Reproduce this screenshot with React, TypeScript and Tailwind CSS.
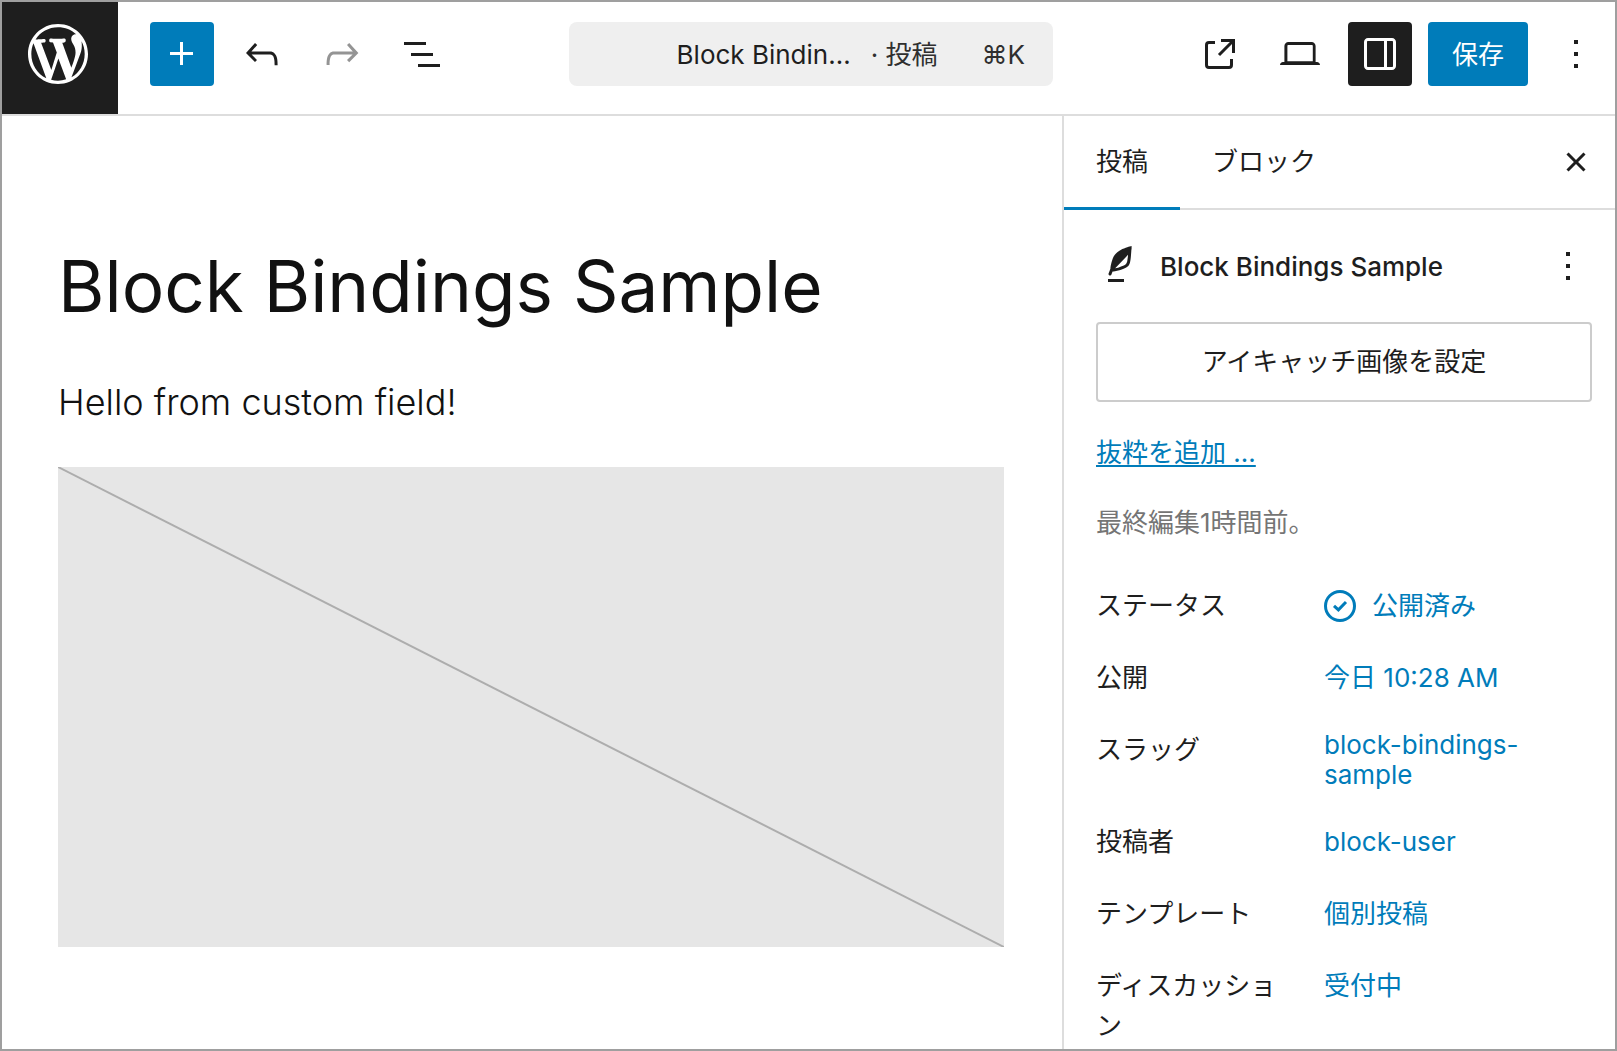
import { useState } from "react";
import type { ReactNode } from "react";

const ICONS = {
  wordpress:
    "M20 10c0-5.51-4.49-10-10-10C4.48 0 0 4.49 0 10c0 5.52 4.48 10 10 10 5.51 0 10-4.48 10-10zM7.78 15.37L4.37 6.22c.55-.02 1.17-.08 1.17-.08.5-.06.44-1.13-.06-1.11 0 0-1.45.11-2.37.11-.18 0-.37 0-.58-.01C4.12 2.69 6.87 1.11 10 1.11c2.33 0 4.45.87 6.05 2.34-.68-.11-1.65.39-1.65 1.58 0 .74.45 1.36.9 2.1.35.61.55 1.36.55 2.46 0 1.49-1.4 5-1.4 5l-3.03-8.37c.54-.02.82-.17.82-.17.5-.05.44-1.25-.06-1.22 0 0-1.44.12-2.38.12-.87 0-2.33-.12-2.33-.12-.5-.03-.56 1.2-.06 1.22l.92.08 1.26 3.41zM17.41 10c.24-.64.74-1.87.43-4.25.7 1.29 1.05 2.71 1.05 4.25 0 3.29-1.73 6.24-4.4 7.78.97-2.59 1.94-5.2 2.92-7.78zM6.1 18.09C3.12 16.65 1.11 13.53 1.11 10c0-1.3.23-2.48.72-3.59C3.25 10.3 4.67 14.2 6.1 18.09zm4.03-6.63l2.58 6.98c-.86.29-1.76.45-2.71.45-.79 0-1.57-.11-2.29-.33.81-2.38 1.62-4.74 2.42-7.1z",
  plus: "M11 12.5V17.5H12.5V12.5H17.5V11H12.5V6H11V11H6V12.5H11Z",
  undo: "M18.3 11.7c-.6-.6-1.4-.9-2.3-.9H6.7l2.9-3.3-1.1-1-4.5 5L8.5 16l1-1-2.7-2.7H16c.5 0 .9.2 1.3.5 1 1 1 3.4 1 4.5v.3h1.5v-.2c0-1.5 0-4.3-1.5-5.7z",
  redo: "M15.6 6.5l-1.1 1 2.9 3.3H8c-.9 0-1.7.3-2.3.9-1.4 1.5-1.4 4.2-1.4 5.6v.2h1.5v-.3c0-1.1 0-3.5 1-4.5.3-.3.7-.5 1.3-.5h9.2L14.5 15l1.1 1.1 4.6-4.6-4.6-5z",
  listView: "M3 6h11v1.5H3V6Zm3.5 5.5h11V13h-11v-1.5ZM21 17H10v1.5h11V17Z",
  external:
    "M19.5 4.5h-7V6h4.44l-5.97 5.97 1.06 1.06L18 7.06v4.44h1.5v-7Zm-13 1a2 2 0 0 0-2 2v10a2 2 0 0 0 2 2h10a2 2 0 0 0 2-2v-3H17v3a.5.5 0 0 1-.5.5h-10a.5.5 0 0 1-.5-.5v-10a.5.5 0 0 1 .5-.5h3V5.5h-3Z",
  desktop:
    "M20.5 16h-.7V8c0-1.1-.9-2-2-2H6.2c-1.1 0-2 .9-2 2v8h-.7c-.8 0-1.5.7-1.5 1.5h20c0-.8-.7-1.5-1.5-1.5zM5.7 8c0-.3.2-.5.5-.5h11.7c.3 0 .5.2.5.5v7.6H5.7V8z",
  drawerRight:
    "M18 4H6c-1.1 0-2 .9-2 2v12c0 1.1.9 2 2 2h12c1.1 0 2-.9 2-2V6c0-1.1-.9-2-2-2zm-4 14.5H6c-.3 0-.5-.2-.5-.5V6c0-.3.2-.5.5-.5h8v13zm4.5-.5c0 .3-.2.5-.5.5h-2.5v-13H18c.3 0 .5.2.5.5v12z",
  more: "M13 19h-2v-2h2v2zm0-6h-2v-2h2v2zm0-6h-2V5h2v2z",
  close:
    "M12 13.06l3.712 3.713 1.061-1.06L13.061 12l3.712-3.712-1.06-1.06L12 10.938 8.288 7.227l-1.061 1.06L10.939 12l-3.712 3.712 1.06 1.061L12 13.061z",
  quill:
    "M17.8 2l-.9.3c-.1 0-3.6 1-5.2 2.1C10 5.5 9.3 6.5 8.9 7.1c-.6.9-1.7 4.7-1.7 6.3l-.9 2.3c-.2.4 0 .8.4 1 .1 0 .2.1.3.1.3 0 .6-.2.7-.5l.6-1.5c.3 0 .7-.1 1.2-.2.7-.1 1.4-.3 2.2-.5.8-.2 1.6-.5 2.4-.8.7-.3 1.4-.7 1.9-1.2s.8-1.2 1-1.9c.2-.7.3-1.6.4-2.4.1-.8.1-1.7.2-2.5 0-.8.1-1.5.2-2.1V2zm-1.9 5.6c-.1.8-.2 1.5-.3 2.1-.2.6-.4 1-.6 1.3-.3.3-.8.6-1.4.9-.7.3-1.4.5-2.2.8-.6.2-1.3.3-1.8.4L15 7.5c.3-.3.6-.7 1-1.1 0 .4 0 .8-.1 1.2zM6 20h8v-1.5H6V20z",
};

function Icon({ name }: { name: keyof typeof ICONS }) {
  return (
    <svg viewBox="0 0 24 24" className="size-12 shrink-0 fill-current" aria-hidden="true">
      <path d={ICONS[name]} />
    </svg>
  );
}

function PublishedIcon() {
  return (
    <svg
      viewBox="0 0 24 24"
      className="-ml-2 size-12 shrink-0 fill-none stroke-current"
      strokeWidth="1.5"
      aria-hidden="true"
    >
      <circle cx="12" cy="12" r="7.25" />
      <path d="M9 11.9l2.2 2 3.8-3.9" />
    </svg>
  );
}

type ToolButtonProps = {
  icon: keyof typeof ICONS;
  label: string;
  variant?: "plain" | "primary" | "pressed";
  disabled?: boolean;
  onClick?: () => void;
};

function ToolButton({ icon, label, variant = "plain", disabled, onClick }: ToolButtonProps) {
  const colors = {
    plain: "text-[#1e1e1e] disabled:text-[#949494]",
    primary: "bg-[#007cba] text-white",
    pressed: "bg-[#1e1e1e] text-white",
  };
  return (
    <button
      type="button"
      aria-label={label}
      disabled={disabled}
      onClick={onClick}
      className={`flex size-16 shrink-0 items-center justify-center rounded-sm ${colors[variant]}`}
    >
      <Icon name={icon} />
    </button>
  );
}

function Header() {
  return (
    <header className="flex shrink-0 items-start border-b-2 border-[#ddd]">
      <a
        href="#dashboard"
        aria-label="投稿一覧を表示"
        className="flex h-28 w-29 shrink-0 justify-center bg-[#1e1e1e] pt-4 pr-1 text-white"
      >
        <svg viewBox="-2 -2 24 24" className="size-18 fill-current" aria-hidden="true">
          <path d={ICONS.wordpress} />
        </svg>
      </a>

      <div className="flex gap-4 pt-5 pl-8">
        <ToolButton icon="plus" label="ブロック挿入ツールを切り替え" variant="primary" />
        <ToolButton icon="undo" label="元に戻す" />
        <ToolButton icon="redo" label="やり直す" disabled />
        <ToolButton icon="listView" label="ドキュメント概観" />
      </div>

      <div className="flex min-w-0 flex-1 justify-center pt-5 pr-5">
        <button
          type="button"
          className="flex h-16 w-full max-w-[484px] items-center justify-end rounded-lg bg-[#efefef] pt-0.5 pr-7 whitespace-nowrap"
        >
          <span>Block Bindin…</span>
          <span className="ml-5 text-[#2f2f2f]">· 投稿</span>
          <span className="ml-11 text-[#2f2f2f]">⌘K</span>
        </button>
      </div>

      <div className="flex gap-4 pt-5 pr-[7px]">
        <ToolButton icon="external" label="投稿を表示" />
        <ToolButton icon="desktop" label="表示" />
        <ToolButton icon="drawerRight" label="設定" variant="pressed" />
        <button type="button" className="h-16 rounded-sm bg-[#007cba] px-6 pt-0.5 text-white">
          保存
        </button>
        <ToolButton icon="more" label="オプション" />
      </div>
    </header>
  );
}

function Canvas() {
  return (
    <main className="min-w-0 flex-1 pt-[126px] pr-[58px] pl-14 text-[#111]">
      <h1 className="text-[71px] leading-[88px]">Block Bindings Sample</h1>
      <p className="mt-10 text-[36px] leading-[64px] font-light">Hello from custom field!</p>
      <div className="mt-[33px] h-[480px] bg-[#e6e6e6]">
        <svg
          viewBox="0 0 100 100"
          preserveAspectRatio="none"
          className="size-full stroke-[#adadad]"
          aria-hidden="true"
        >
          <line x1="0" y1="0" x2="100" y2="100" strokeWidth="2" vectorEffect="non-scaling-stroke" />
        </svg>
      </div>
    </main>
  );
}

function PanelRow({ label, icon, children }: { label: string; icon?: ReactNode; children: ReactNode }) {
  return (
    <div className="flex items-start gap-4">
      <span className="w-[212px] shrink-0 py-3 pr-2 leading-10">{label}</span>
      <button
        type="button"
        className="flex min-h-16 min-w-0 items-center gap-2 text-left leading-[30px] text-[#007cba]"
      >
        {icon}
        <span className={icon ? "" : "py-3"}>{children}</span>
      </button>
    </div>
  );
}

const TABS = ["投稿", "ブロック"];

function Sidebar() {
  const [activeTab, setActiveTab] = useState("投稿");

  return (
    <aside className="w-[553px] shrink-0 overflow-hidden border-l-2 border-[#ddd]">
      <div className="flex h-[94px] items-stretch border-b-2 border-[#ddd]">
        <div role="tablist" className="flex flex-1">
          {TABS.map((tab) => (
            <button
              key={tab}
              type="button"
              role="tab"
              aria-selected={tab === activeTab}
              onClick={() => setActiveTab(tab)}
              className={`-mb-0.5 border-b-3 px-8 ${
                tab === activeTab ? "border-[#007cba]" : "border-transparent"
              }`}
            >
              {tab}
            </button>
          ))}
        </div>
        <button type="button" aria-label="設定を閉じる" className="pr-[15px]">
          <Icon name="close" />
        </button>
      </div>

      <div className="flex flex-col items-stretch gap-8 py-8 pr-[23px] pl-8">
        <div className="flex items-center gap-4">
          <Icon name="quill" />
          <h2 className="flex-1 pt-0.5 font-medium">Block Bindings Sample</h2>
          <button type="button" aria-label="操作">
            <Icon name="more" />
          </button>
        </div>

        <button type="button" className="h-20 rounded-sm border-2 border-[#ccc]">
          アイキャッチ画像を設定
        </button>

        <a
          href="#excerpt"
          className="self-start leading-[38px] text-[#007cba] underline decoration-2 underline-offset-3"
        >
          抜粋を追加 ...
        </a>

        <p className="leading-[38px] text-[#757575]">最終編集1時間前。</p>

        <div className="flex flex-col gap-2">
          <PanelRow label="ステータス" icon={<PublishedIcon />}>
            公開済み
          </PanelRow>
          <PanelRow label="公開">今日 10:28 AM</PanelRow>
          <PanelRow label="スラッグ">block-bindings-sample</PanelRow>
          <PanelRow label="投稿者">block-user</PanelRow>
          <PanelRow label="テンプレート">個別投稿</PanelRow>
          <PanelRow label="ディスカッション">受付中</PanelRow>
        </div>
      </div>
    </aside>
  );
}

export default function App() {
  return (
    <div
      lang="ja"
      className="flex h-screen flex-col overflow-hidden border-2 border-[#9f9f9f] bg-white font-['Inter','Noto_Sans_CJK_JP',sans-serif] text-[26px] leading-9 text-[#1e1e1e]"
    >
      <Header />
      <div className="flex min-h-0 flex-1">
        <Canvas />
        <Sidebar />
      </div>
    </div>
  );
}
